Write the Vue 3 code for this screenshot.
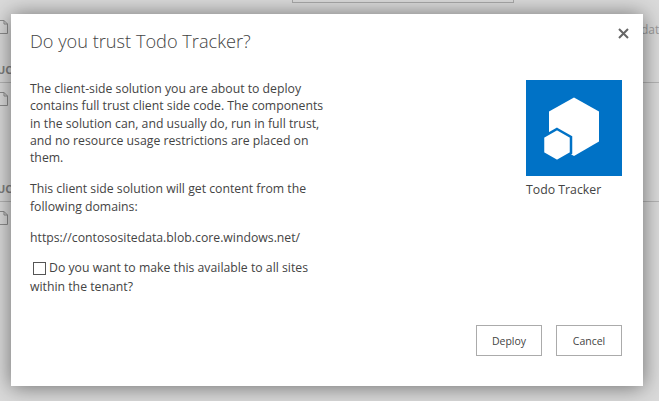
<template>
  <div class="page">
    <!-- list behind the overlay -->
    <div class="backdrop">
      <div class="top-box"></div>
      <div class="bg-text data">data</div>
      <div class="bg-row r1"></div>
      <div class="bg-row r2"></div>
      <div class="bg-text uc u1">UC</div>
      <div class="bg-text uc u2">UC</div>
      <svg v-for="y in docs" :key="y" class="doc" :style="{ top: `${y}px` }" width="8" height="14" viewBox="0 0 8 14">
        <path d="M-3 .5h7l3.500 3.500v9.500h-10.500M4 .5v3.500h3.500" fill="none" stroke="#8c8c8c" />
      </svg>
    </div>

    <div class="dialog">
      <button class="close" aria-label="Close">
        <svg width="11" height="11" viewBox="0 0 11 11">
          <path d="M1 1l9 9M10 1l-9 9" stroke="#666" stroke-width="2" fill="none" />
        </svg>
      </button>
      <h1 class="title">Do you trust Todo Tracker?</h1>
      <div class="body">
        <div class="copy">
          <p>The client-side solution you are about to deploy contains full trust client side code. The components in the solution can, and usually do, run in full trust, and no resource usage restrictions are placed on them.</p>
          <p>This client side solution will get content from the following domains:</p>
          <p>https://contosositedata.blob.core.windows.net/</p>
          <label class="tenant">
            <span class="check"></span>Do you want to make this available to all sites within the tenant?
          </label>
        </div>
        <div class="app">
          <svg class="logo" width="96" height="96" viewBox="0 0 96 96">
            <rect width="96" height="96" fill="#0072c6" />
            <path d="M48 17.500l25 14v30l-25 14.500-25-14.500v-30z" fill="#fff" />
            <path d="M31 49l14 8v16l-14 8-14-8v-16z" fill="#fff" stroke="#0072c6" stroke-width="2.500" />
          </svg>
          <div class="app-name">Todo Tracker</div>
        </div>
      </div>
      <div class="actions">
        <button class="btn">Deploy</button>
        <button class="btn">Cancel</button>
      </div>
    </div>
  </div>
</template>

<script setup>
// y positions of the file icons showing behind the dialog
const docs = [20, 92, 211]
</script>

<style>
html,
body {
  margin: 0;
  overflow: hidden;
}
</style>

<style scoped>
.page {
  position: relative;
  width: 659px;
  height: 401px;
  overflow: hidden;
  background: #dadada;
  font-family: "Open Sans", "Noto Sans", sans-serif;
  color: #444;
}

.backdrop {
  position: absolute;
  inset: 0;
}

.top-box {
  position: absolute;
  left: 292px;
  top: -1px;
  width: 220px;
  height: 2px;
  border: 1px solid #a8a8a8;
}

.bg-row {
  position: absolute;
  left: 0;
  right: 0;
  height: 1px;
  background: #b4b4b4;
}

.r1 {
  top: 82px;
}

.r2 {
  top: 201px;
}

.bg-text {
  position: absolute;
  font-size: 12px;
  color: #9a9a9a;
}

.data {
  left: 641px;
  top: 21px;
}

.uc {
  left: -3px;
  font-weight: 700;
  font-size: 11px;
  color: #808080;
}

.u1 {
  top: 62px;
}

.u2 {
  top: 181px;
}

.doc {
  position: absolute;
  left: 0;
}

.dialog {
  position: absolute;
  left: 11px;
  top: 14px;
  width: 632px;
  height: 372px;
  box-sizing: border-box;
  padding: 14px 21px 0 19px;
  display: flex;
  flex-direction: column;
  background: #fff;
  box-shadow: 0 1px 20px rgba(0, 0, 0, 0.5);
}

.close {
  position: absolute;
  top: 14px;
  right: 14px;
  padding: 0;
  border: 0;
  background: none;
  display: flex;
}

.title {
  margin: 0;
  font-size: 18.2px;
  line-height: 26px;
  font-weight: 300;
}

.body {
  margin-top: 26px;
  display: flex;
  justify-content: space-between;
  flex: 1;
}

.copy {
  width: 300px;
  font-size: 12.25px;
  line-height: 17.33px;
}

.copy p {
  margin: 0 0 13.67px;
}

.tenant {
  display: block;
  margin-top: -2px;
  line-height: 19px;
}

.check {
  display: inline-block;
  width: 11px;
  height: 11px;
  margin: 0 3px 0 3px;
  border: 1px solid #555;
  vertical-align: -3px;
}

.app {
  width: 96px;
}

.logo {
  display: block;
}

.app-name {
  margin-top: 5px;
  font-size: 12.3px;
  line-height: 18px;
}

.actions {
  display: flex;
  justify-content: flex-end;
  gap: 14px;
  padding-bottom: 30px;
}

.btn {
  width: 66px;
  height: 31px;
  padding: 0;
  border: 1px solid #ababab;
  background: #fff;
  font: inherit;
  font-size: 10.5px;
  color: #444;
}
</style>
